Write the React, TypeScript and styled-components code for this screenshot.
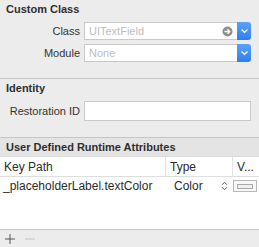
import React from 'react';
import styled, { createGlobalStyle } from 'styled-components';

const GlobalStyle = createGlobalStyle`
  html, body {
    margin: 0;
    padding: 0;
    background: #ececec;
  }
  body {
    font-family: "Liberation Sans", Arial, sans-serif;
    font-size: 11px;
    color: #2b2b2b;
  }
`;

const Panel = styled.div`
  width: 259px;
  height: 247px;
  overflow: hidden;
  background: #ececec;
`;

const Section = styled.div<{ $pt: number; $pb: number }>`
  padding: ${(p) => p.$pt}px 0 ${(p) => p.$pb}px 0;
  border-bottom: 1px solid #c6c6c6;
`;

const SectionTitle = styled.div`
  font-weight: bold;
  font-size: 11px;
  height: 15px;
  line-height: 15px;
  padding-left: 6px;
  color: #2e2e2e;
`;

const Rows = styled.div`
  display: flex;
  flex-direction: column;
  gap: 4px;
  margin-top: 5px;
`;

const Row = styled.div<{ $h: number }>`
  display: flex;
  align-items: center;
  gap: 4px;
  height: ${(p) => p.$h}px;
`;

const Label = styled.div`
  width: 80px;
  text-align: right;
  font-size: 11px;
  color: #333;
`;

const Combo = styled.div`
  display: flex;
  width: 167px;
  height: 18px;
`;

const Field = styled.div`
  flex: 1;
  display: flex;
  align-items: center;
  box-sizing: border-box;
  background: #fff;
  border: 1px solid #c9c9c9;
  border-right: none;
  padding: 0 4px;
  font-size: 11px;
  color: #bdbdbd;
`;

const PlainField = styled(Field)`
  width: 167px;
  height: 20px;
  flex: none;
  border-right: 1px solid #c9c9c9;
`;

const Placeholder = styled.span`
  flex: 1;
`;

const BlueButton = styled.div`
  width: 14px;
  display: flex;
  align-items: center;
  justify-content: center;
  background: linear-gradient(#5aa2f8, #2f7ef2);
  border-radius: 0 3px 3px 0;
`;

const TableHeaderBar = styled.div`
  height: 18px;
  line-height: 18px;
  padding-left: 6px;
  font-weight: bold;
  font-size: 11px;
  color: #2e2e2e;
  background: #e4e4e4;
`;

const Table = styled.div`
  background: #fff;
  height: 72px;
  border-top: 1px solid #dcdcdc;
  border-bottom: 1px solid #c6c6c6;
`;

const TRow = styled.div<{ $head?: boolean }>`
  display: grid;
  grid-template-columns: 165px 67px 1fr;
  height: ${(p) => (p.$head ? 19 : 18)}px;
  align-items: center;
  border-bottom: ${(p) => (p.$head ? '1px solid #dedede' : 'none')};
  font-size: 12px;
  color: #2b2b2b;
`;

const Cell = styled.div<{ $sep?: boolean; $pl: number }>`
  height: 100%;
  display: flex;
  align-items: center;
  padding-left: ${(p) => p.$pl}px;
  border-left: ${(p) => (p.$sep ? '1px solid #e2e2e2' : 'none')};
  overflow: hidden;
  white-space: nowrap;
`;

const TypeCell = styled.div`
  display: flex;
  align-items: center;
  justify-content: space-between;
  padding: 0 4px 0 9px;
`;

const ColorWell = styled.div`
  width: 22px;
  height: 10px;
  border: 1px solid #b8b8b8;
  background: #f7f7f7;
  display: flex;
  align-items: center;
  justify-content: center;
  margin-left: 1px;
`;

const WellSwatch = styled.div`
  width: 14px;
  height: 3px;
  border: 1px solid #a9a9a9;
  background: #f0f0f0;
`;

const Footer = styled.div`
  height: 17px;
  display: flex;
  align-items: center;
  gap: 8px;
  padding-left: 4px;
  border-bottom: 1px solid #c6c6c6;
`;

const Chevron = () => (
  <svg width="9" height="6" viewBox="0 0 9 6">
    <path d="M1.5 1.5 L4.5 4.3 L7.5 1.5" stroke="#fff" strokeWidth="1.3" fill="none" />
  </svg>
);

const GoIcon = () => (
  <svg width="11" height="11" viewBox="0 0 11 11">
    <circle cx="5.5" cy="5.5" r="5" fill="#8e8e8e" />
    <path d="M2.5 5.5 H7.5 M5.5 3.3 L7.7 5.5 L5.5 7.7" stroke="#fff" strokeWidth="1.4" fill="none" />
  </svg>
);

const Stepper = () => (
  <svg width="7" height="10" viewBox="0 0 7 10">
    <path d="M1 3.8 L3.5 1.3 L6 3.8 M1 6.2 L3.5 8.7 L6 6.2" stroke="#555" strokeWidth="1" fill="none" />
  </svg>
);

const PlusMinus = ({ minus, color }: { minus?: boolean; color: string }) => (
  <svg width="12" height="12" viewBox="0 0 12 12">
    <path d={minus ? 'M1 6 H11' : 'M1 6 H11 M6 1 V11'} stroke={color} strokeWidth="1" fill="none" />
  </svg>
);

export default function App() {
  return (
    <Panel>
      <GlobalStyle />
      <Section $pt={2} $pb={16}>
        <SectionTitle>Custom Class</SectionTitle>
        <Rows>
          <Row $h={18}>
            <Label>Class</Label>
            <Combo>
              <Field>
                <Placeholder>UITextField</Placeholder>
                <GoIcon />
              </Field>
              <BlueButton>
                <Chevron />
              </BlueButton>
            </Combo>
          </Row>
          <Row $h={18}>
            <Label>Module</Label>
            <Combo>
              <Field>
                <Placeholder>None</Placeholder>
              </Field>
              <BlueButton>
                <Chevron />
              </BlueButton>
            </Combo>
          </Row>
        </Rows>
      </Section>
      <Section $pt={2} $pb={16}>
        <SectionTitle>Identity</SectionTitle>
        <Rows>
          <Row $h={20}>
            <Label>Restoration ID</Label>
            <PlainField />
          </Row>
        </Rows>
      </Section>
      <TableHeaderBar>User Defined Runtime Attributes</TableHeaderBar>
      <Table>
        <TRow $head>
          <Cell $pl={4}>Key Path</Cell>
          <Cell $sep $pl={4}>Type</Cell>
          <Cell $sep $pl={4}>V...</Cell>
        </TRow>
        <TRow>
          <Cell $pl={3}>_placeholderLabel.textColor</Cell>
          <TypeCell>
            Color
            <Stepper />
          </TypeCell>
          <Cell $pl={0}>
            <ColorWell>
              <WellSwatch />
            </ColorWell>
          </Cell>
        </TRow>
      </Table>
      <Footer>
        <PlusMinus color="#555" />
        <PlusMinus minus color="#c4c4c4" />
      </Footer>
    </Panel>
  );
}
